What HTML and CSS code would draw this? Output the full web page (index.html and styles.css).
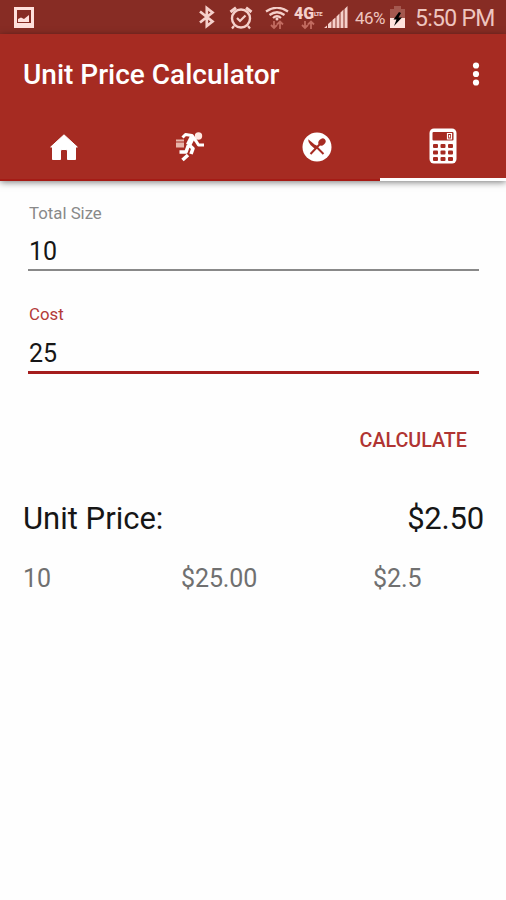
FILE: index.html
```html
<!DOCTYPE html>
<html lang="en">
<head>
<meta charset="utf-8">
<title>Unit Price Calculator</title>
<link rel="stylesheet" href="styles.css">
</head>
<body>
<div class="status">
  <svg class="picture" width="20" height="21" viewBox="0 0 20 21"><path fill="#ffe0dc" fill-rule="evenodd" d="M0 0H20V21H0ZM3 3V16H17V3Z"/><path fill="#ffe0dc" d="M4 15V12L7 10.500L10 12L15 8V15Z"/></svg>
  <svg class="bluetooth" width="18" height="24" viewBox="0 0 18 24"><path fill="none" stroke="#f5d0cb" stroke-width="2.7" d="M2 6.5L14.5 16.5L8.8 21V3L14.5 7.5L2 17.5"/></svg>
  <svg class="alarm" width="24" height="24" viewBox="0 0 24 24"><g fill="none" stroke="#f5d0cb"><circle cx="12" cy="12.5" r="9" stroke-width="2.4"/><path stroke-width="2.2" d="M8 12L11 15L16.5 9.5M5 20L3 22.5M19 20L21 22.5"/><path stroke-width="3" d="M1.5 6L7 1.8M22.5 6L17 1.8"/></g></svg>
  <svg class="wifi" width="24" height="24" viewBox="0 0 24 24"><g fill="none" stroke="#f5d0cb" stroke-width="2.2"><path d="M1 4.500Q12-3 23 4.500M4.500 8Q12 2.500 19.500 8M8 11Q12 7.500 16 11"/></g><circle cx="12" cy="12" r="1.5" fill="#f5d0cb"/><path fill="none" stroke="#c26b60" stroke-width="1.8" d="M9 14V21M6 18L9 21L12 18M15 22V14.500M12 17.500L15 14.500L18 17.500"/></svg>
  <div class="network"><div class="network-name"><b>4G</b><small>LTE</small></div><svg width="14" height="10" viewBox="0 0 14 10"><path fill="none" stroke="#c26b60" stroke-width="1.8" d="M4 1V8M1 5L4 8L7 5M10 9V1.500M7 4.500L10 1.500L13 4.500"/></svg></div>
  <svg class="signal" width="24" height="22" viewBox="0 0 24 22"><path fill="#f5d0cb" d="M0 22L3 19.500V22ZM4 22V18L7.500 15V22ZM8.500 22V14L11.500 11.500V22ZM12.500 22V10.500L15.500 7.500V22ZM16.500 22V6.500L19.500 3.500V22ZM20.500 22V3L23.500 0V22Z"/></svg>
  <span class="percent">46%</span>
  <svg class="battery" width="15" height="22" viewBox="0 0 15 22"><path fill="#a4584f" d="M4 0H11V3H15V12H0V3H4Z"/><path fill="#ffe3de" d="M0 12H15V22H0Z"/><path d="M9 6L3.500 13.500H6.500L4 20L12 11.500H8.500L11 7Z"/></svg>
  <span class="time">5:50 PM</span>
</div>
<header class="appbar">
  <div class="titlebar"><h1>Unit Price Calculator</h1><svg width="8" height="24" viewBox="0 0 8 24"><g fill="#fff"><circle cx="4" cy="3.500" r="3.100"/><circle cx="4" cy="12" r="3.100"/><circle cx="4" cy="20.500" r="3.100"/></g></svg></div>
  <nav class="tabs">
    <div class="tab"><svg width="28" height="26" viewBox="0 0 28 26"><path fill="#fff" stroke="#fff" stroke-width="1" stroke-linejoin="round" d="M14 .8L27.300 13H25.500V25.500H17.500V17Q17.500 15.500 16 15.500H12Q10.500 15.500 10.500 17V25.500H2.500V13H.7Z"/></svg></div>
    <div class="tab"><svg class="runner" width="30" height="30" viewBox="0 0 30 30"><circle cx="23.500" cy="4" r="3.700" fill="#ffe7e1"/><path fill="#e8b5aa" d="M1 7.500H9V9.500H1ZM1 10.500H9V15.500H1Z"/><g fill="none" stroke="#fff" stroke-linejoin="round"><path stroke-width="3" d="M7.500 5.500L10.500 2.500L17 3.500L21 9L23.500 13H29"/><path stroke-width="5.500" d="M17.500 5L13.500 13"/><path stroke-width="3.600" d="M13 12L18 16.500L16 22M13.500 13L11 20H4.500M13 23L7.500 28"/></g></svg></div>
    <div class="tab"><svg width="30" height="30" viewBox="0 0 30 30"><circle cx="15" cy="15" r="14.500" fill="#fff"/><g fill="#a62b22"><path d="M6.200 7.200L15 14.500L13 17L8.500 13Q6 10.500 6.200 7.200Z"/><ellipse cx="20" cy="10" rx="4" ry="3.100" transform="rotate(-45 20 10)"/></g><path fill="none" stroke="#a62b22" stroke-width="2" d="M18.500 11.500L8.500 22M13 13.500L21.500 22"/></svg></div>
    <div class="tab active"><svg width="28" height="36" viewBox="0 0 28 36"><rect x=".5" y=".5" width="27" height="35" rx="4.500" fill="#fff"/><g fill="#a62b22"><rect x="3.500" y="4" width="21" height="8.500" rx="1"/><rect x="4" y="16" width="5" height="4" rx="1"/><rect x="11.500" y="16" width="5" height="4" rx="1"/><rect x="19" y="16" width="5" height="4" rx="1"/><rect x="4" y="22.500" width="5" height="4" rx="1"/><rect x="11.500" y="22.500" width="5" height="4" rx="1"/><rect x="19" y="22.500" width="5" height="4" rx="1"/><rect x="4" y="29" width="5" height="4" rx="1"/><rect x="11.500" y="29" width="5" height="4" rx="1"/><rect x="19" y="29" width="5" height="4" rx="1"/></g><path fill="none" stroke="#fff" stroke-width="1.200" d="M18.500 5.500H22.500V11H18.500ZM20.500 7V9.500"/></svg></div>
  </nav>
</header>
<main>
  <section class="field"><label>Total Size</label><div class="value">10</div></section>
  <section class="field focused"><label>Cost</label><div class="value">25</div></section>
  <div class="actions"><button>CALCULATE</button></div>
  <div class="total"><span>Unit Price:</span><span class="price">$2.50</span></div>
  <div class="history"><span>10</span><span>$25.00</span><span>$2.5</span></div>
</main>
</body>
</html>
```
FILE: styles.css
```css
* { box-sizing: border-box; }
body { margin: 0; background: #fefefe; font-family: Roboto, sans-serif; height: 900px; overflow: hidden; }
svg { display: block; flex: none; }
.status { height: 34px; background: #872c24; display: flex; align-items: flex-start; padding-top: 6px; color: #eec5bf; white-space: nowrap; }
.picture { margin: 1px 0 0 14px; }
.bluetooth { margin: -1px 0 0 164px; }
.alarm { margin-left: 13px; }
.wifi { margin: 1px 0 0 12px; }
.network { width: 27px; margin: 1px 0 0 5px; }
.network-name { display: flex; height: 13px; line-height: 13px; color: #f5d0cb; }
.network-name b { font-size: 16px; font-weight: 900; width: 20px; }
.network-name small { font-size: 6px; font-weight: 700; letter-spacing: -.5px; }
.network svg { margin-left: 7px; }
.signal { margin-left: 3px; }
.percent { width: 34px; margin-left: 7px; font-size: 17px; line-height: 25px; letter-spacing: -.6px; }
.battery { margin-left: 1px; }
.time { margin-left: 10px; font-size: 23px; line-height: 26px; letter-spacing: -.7px; }
.appbar { height: 146px; background: #a62b22; box-shadow: 0 2px 7px rgba(0,0,0,.55); position: relative; }
.titlebar { height: 80px; padding: 2px 26px 0 23px; display: flex; align-items: center; justify-content: space-between; }
.titlebar svg { margin-top: -2px; }
h1 { margin: 0; font-size: 28px; font-weight: 500; color: #fff; white-space: nowrap; line-height: 32px; }
.tabs { height: 67px; display: grid; grid-template-columns: repeat(4, 1fr); }
.tab { display: flex; justify-content: center; align-items: center; padding: 1px 0 0 1px; border-bottom: 2px solid #a51b15; }
.runner { margin-bottom: 1px; }
.tab.active { border-bottom: 3px solid #fff; padding-top: 0; }
main { padding: 22px 0 0; }
.field { height: 102px; margin: 0 27px 0 28px; }
label { display: block; padding-left: 1px; font-size: 16.8px; line-height: 22px; color: #898989; }
.value { height: 47px; border-bottom: 2px solid #898989; font-size: 25px; line-height: 56px; color: #161616; padding-left: 1px; }
.focused label { color: #b33a38; line-height: 21px; height: 22px; }
.focused .value { height: 48px; line-height: 55px; border-bottom: 3px solid #a51d1d; }
.actions { display: flex; justify-content: flex-end; height: 70px; margin-right: 39px; align-items: center; }
button { border: 0; padding: 0; background: none; font: 500 19.7px/24px Roboto, sans-serif; color: #b03432; }
.total { display: flex; justify-content: space-between; padding: 0 22px 0 23px; margin-top: 24px; font-size: 31px; line-height: 38px; color: #161616; }
.price { letter-spacing: -.2px; }
.history { display: grid; grid-template-columns: 158px 192px 1fr; padding-left: 23px; margin-top: 26px; font-size: 25px; line-height: 30px; letter-spacing: -.1px; color: #707070; }
```
